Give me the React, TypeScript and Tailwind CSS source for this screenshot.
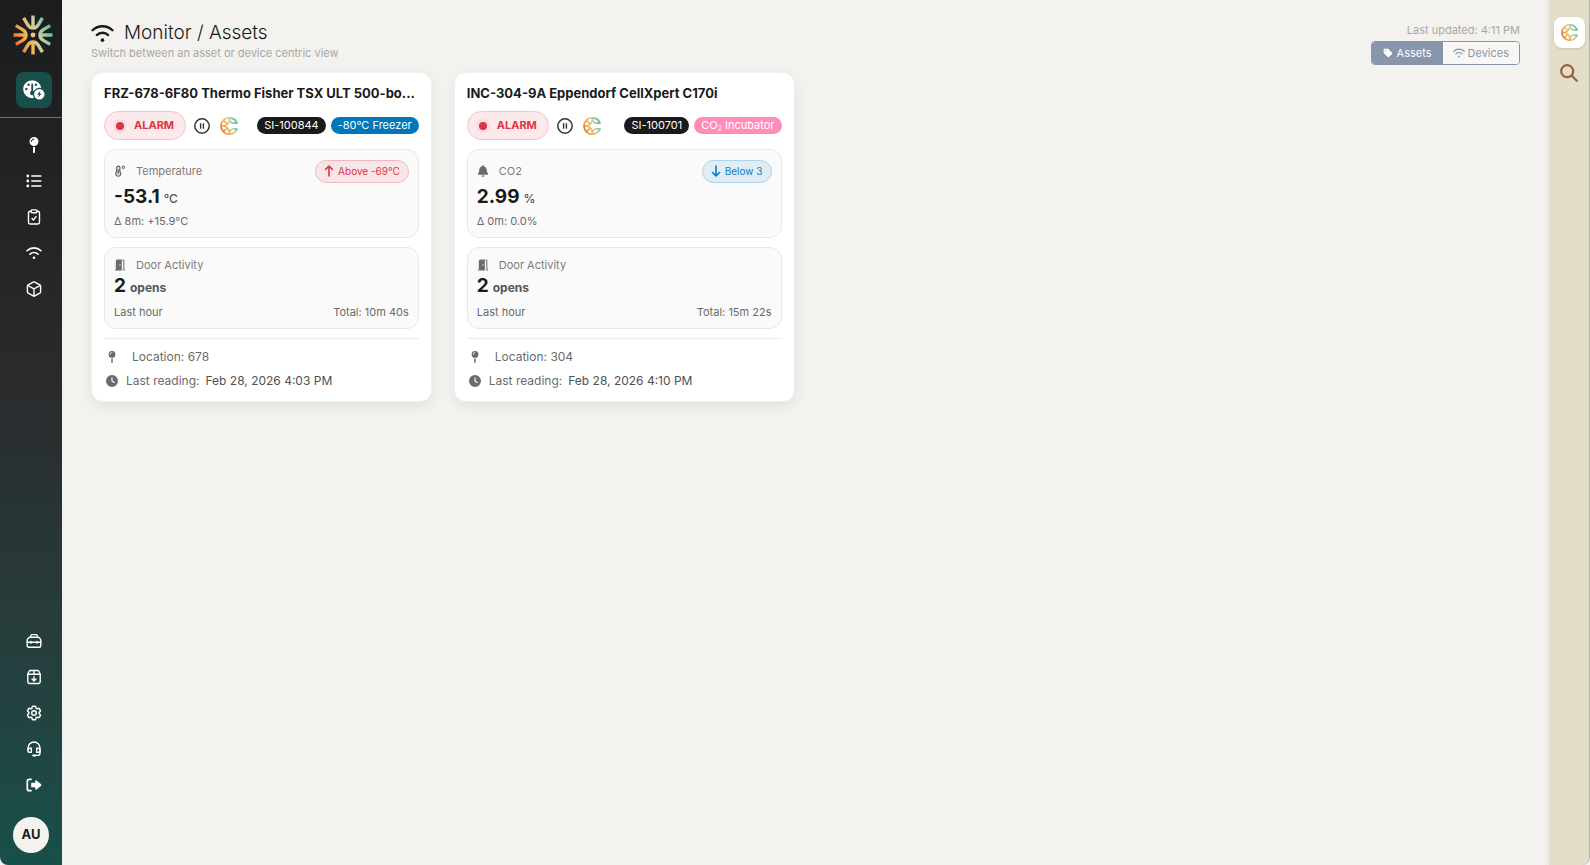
import { useId } from "react";
import type { ReactNode } from "react";
import { FaBell, FaClock, FaMapPin, FaTag } from "react-icons/fa6";
import { HiOutlineCog6Tooth } from "react-icons/hi2";

type IconProps = { className?: string };

const WifiIcon = ({ className }: IconProps) => (
  <svg viewBox="0 0 24 20" fill="none" stroke="currentColor" strokeWidth="2.5" strokeLinecap="round" className={className} aria-hidden="true">
    <path d="M1.500 6.600C7.400.9 16.600.9 22.500 6.600" />
    <path d="M6 11.600c3.300-3.100 8.700-3.100 12 0" />
    <circle cx="12" cy="17" r="1.900" fill="currentColor" stroke="none" />
  </svg>
);

const ListIcon = ({ className }: IconProps) => (
  <svg viewBox="0 0 16 16" fill="none" stroke="currentColor" strokeWidth="1.6" strokeLinecap="round" className={className} aria-hidden="true">
    <path d="M5.8 3h9M5.8 8h9M5.8 13h9" />
    <g fill="currentColor" stroke="none">
      <circle cx="1.8" cy="3" r="1.4" />
      <circle cx="1.8" cy="8" r="1.4" />
      <circle cx="1.8" cy="13" r="1.4" />
    </g>
  </svg>
);

const ClipboardIcon = ({ className }: IconProps) => (
  <svg viewBox="0 0 16 16" fill="none" stroke="currentColor" strokeWidth="1.4" strokeLinecap="round" strokeLinejoin="round" className={className} aria-hidden="true">
    <path d="M5 2.2H4.2c-1 0-1.7.7-1.7 1.7v9.4c0 1 .7 1.7 1.7 1.7h7.6c1 0 1.7-.7 1.7-1.7V3.9c0-1-.7-1.7-1.7-1.7H11" />
    <rect x="5" y=".9" width="6" height="2.8" rx="1.2" />
    <path d="m6 9.6 1.4 1.4L10 7.6" />
  </svg>
);

const CubeIcon = ({ className }: IconProps) => (
  <svg viewBox="0 0 16 16" fill="none" stroke="currentColor" strokeWidth="1.4" strokeLinecap="round" strokeLinejoin="round" className={className} aria-hidden="true">
    <path d="M7.2 1.1a1.7 1.7 0 0 1 1.6 0l5 2.7c.5.3.8.8.8 1.4v5.6c0 .6-.3 1.1-.8 1.4l-5 2.7a1.7 1.7 0 0 1-1.6 0l-5-2.7c-.5-.3-.8-.8-.8-1.4V5.2c0-.6.3-1.1.8-1.4z" />
    <path d="M1.8 4.5 8 7.9l6.2-3.4M8 7.9V15" />
  </svg>
);

const ToolboxIcon = ({ className }: IconProps) => (
  <svg viewBox="0 0 16 16" fill="none" stroke="currentColor" strokeWidth="1.4" strokeLinecap="round" strokeLinejoin="round" className={className} aria-hidden="true">
    <path d="M4.700 4.200V3c0-.8.6-1.400 1.400-1.400h3.800c.8 0 1.400.6 1.400 1.400v1.200" />
    <path d="M4 4.200h8c.5 0 .9.200 1.200.5l1.100 1.200c.4.400.5.900.5 1.400v5.100c0 1.100-.7 1.800-1.700 1.800H2.900c-1 0-1.700-.7-1.700-1.800V7.300c0-.5.200-1 .5-1.400l1.100-1.200c.3-.3.700-.5 1.200-.5z" />
    <path d="M1.200 9.300h13.600M5 8.500v1.800M11 8.500v1.800" />
  </svg>
);

const ArchiveIcon = ({ className }: IconProps) => (
  <svg viewBox="0 0 16 16" fill="none" stroke="currentColor" strokeWidth="1.4" strokeLinecap="round" strokeLinejoin="round" className={className} aria-hidden="true">
    <path d="M1.8 5.2 3 2.5c.3-.6.8-1 1.5-1h7c.7 0 1.2.4 1.5 1l1.2 2.7v7.6c0 1-.8 1.7-1.7 1.7h-9c-1 0-1.7-.7-1.7-1.700z" />
    <path d="M1.8 5.2h12.4M8 1.5v3.700M8 7.600v4M6 9.900l2 2 2-2" />
  </svg>
);

const HeadsetIcon = ({ className }: IconProps) => (
  <svg viewBox="0 0 16 16" fill="none" stroke="currentColor" strokeWidth="1.4" strokeLinecap="round" strokeLinejoin="round" className={className} aria-hidden="true">
    <path d="M2 8.500V7a6 6 0 0 1 12 0v5c0 1.400-1 2.400-2.400 2.400H8.500" />
    <path d="M5.300 7.200v4.200H4A2.100 2.100 0 0 1 4 7.200zM10.700 7.200v4.200H12a2.100 2.100 0 0 0 0-4.200z" />
    <path d="M7.200 14.500h2" strokeWidth="2" />
  </svg>
);

const SignOutIcon = ({ className }: IconProps) => (
  <svg viewBox="0 0 16 16" fill="none" stroke="currentColor" strokeWidth="1.7" strokeLinecap="round" strokeLinejoin="round" className={className} aria-hidden="true">
    <path d="M5 2.300H3.300C2.200 2.300 1.300 3.200 1.300 4.300v7.400c0 1.100.9 2 2 2H5" />
    <path d="M6 6.600h4V4.200L14.600 8 10 11.800V9.400H6z" fill="currentColor" />
  </svg>
);

const DashboardIcon = ({ className }: IconProps) => (
  <svg viewBox="0 0 22 20" className={className} aria-hidden="true">
    <circle cx="9.2" cy="9.2" r="9" fill="#fff" />
    <path d="M9.200 4.500v7" stroke="#184f4a" strokeWidth="1.8" strokeLinecap="round" />
    <g fill="#184f4a">
      <circle cx="9.2" cy="13" r="2.2" />
      <circle cx="5.6" cy="4.8" r="1.2" />
      <circle cx="3.4" cy="9" r="1.2" />
      <circle cx="12.9" cy="4.8" r="1.2" />
      <circle cx="16.3" cy="14.2" r="6.4" />
    </g>
    <circle cx="16.3" cy="14.2" r="5.2" fill="#fff" />
    <path d="m17.300 10.900-3.400 3.700h2l-.7 3 3.400-3.900h-2z" fill="#184f4a" />
  </svg>
);

const ThermometerIcon = ({ className }: IconProps) => (
  <svg viewBox="0 0 12 13" fill="none" stroke="currentColor" strokeWidth="1.5" className={className} aria-hidden="true">
    <path d="M2.400 3a1.700 1.700 0 0 1 3.400 0v4.300a2.700 2.700 0 1 1-3.400 0z" />
    <path d="M4.100 5v4.500" strokeLinecap="round" />
    <circle cx="9.6" cy="2.4" r="1.3" strokeWidth="1.1" />
  </svg>
);

const DoorIcon = ({ className }: IconProps) => (
  <svg viewBox="0 0 12 13" fill="currentColor" className={className} aria-hidden="true">
    <path fillRule="evenodd" d="M1.500 1.500 2.500.5H8V12.500H.5v-1.200h1zM5.500 5.800v1.400h1V5.800z" />
    <path d="M8.800.5h1c.5 0 .9.400.9.900v9.900h.8v1.200H9.600V1.800h-.8z" />
  </svg>
);

const PauseIcon = ({ className }: IconProps) => (
  <svg viewBox="0 0 16 16" fill="none" stroke="currentColor" className={className} aria-hidden="true">
    <circle cx="8" cy="8" r="7.2" strokeWidth="1.5" />
    <path d="M6.600 5.300v5.400M9.400 5.300v5.400" strokeWidth="1.4" />
  </svg>
);

const ArrowIcon = ({ down = false }: { down?: boolean }) => (
  <svg viewBox="0 0 10 12" fill="none" stroke="currentColor" strokeWidth="1.6" strokeLinecap="round" strokeLinejoin="round" className="h-3 w-2.5" aria-hidden="true">
    <path d={down ? "M5 1v10M1.500 7.500 5 11l3.500-3.500" : "M5 11V1M1.500 4.500 5 1l3.500 3.500"} />
  </svg>
);

const SearchIcon = ({ className }: IconProps) => (
  <svg viewBox="0 0 18 18" fill="none" stroke="currentColor" strokeWidth="2.2" strokeLinecap="round" className={className} aria-hidden="true">
    <circle cx="7.2" cy="7.2" r="6" />
    <path d="m11.800 11.800 5 5" />
  </svg>
);

const BrandGradient = ({ id, size }: { id: string; size: number }) => (
  <linearGradient id={id} x1="0" y1={size * 0.7} x2={size} y2={size * 0.3} gradientUnits="userSpaceOnUse">
    <stop offset="0" stopColor="#e2662f" />
    <stop offset="0.3" stopColor="#f3b04c" />
    <stop offset="0.6" stopColor="#d3cf9f" />
    <stop offset="1" stopColor="#45c0ab" />
  </linearGradient>
);

const Logo = () => {
  const id = useId();
  return (
    <svg viewBox="0 0 40 40" fill="none" stroke={`url(#${id})`} strokeWidth="3.4" className="size-10" aria-label="Home">
      <defs>
        <BrandGradient id={id} size={40} />
      </defs>
      <path d="M20 .5 20.010 13M20 39.500 20.010 27M.5 20 13 20.010M39.500 20 27 20.010" />
      <path d="M10.600 2.800 14.600 9.600Q16.600 13 20 13T25.400 9.600L29.400 2.800" />
      <path d="M10.600 37.200 14.600 30.400Q16.600 27 20 27T25.400 30.400L29.400 37.200" />
      <path d="M2.800 10.600 9.600 14.600Q13 16.600 13 20T9.600 25.400L2.800 29.400" />
      <path d="M37.200 10.600 30.400 14.600Q27 16.600 27 20T30.400 25.400L37.200 29.400" />
      <circle cx="20" cy="20" r="2.4" fill="#eec28a" stroke="none" />
    </svg>
  );
};

const BrandMark = ({ className }: IconProps) => {
  const id = useId();
  return (
    <svg viewBox="0 0 18 18" fill="none" stroke={`url(#${id})`} strokeWidth="1.7" className={className} aria-hidden="true">
      <defs>
        <BrandGradient id={id} size={18} />
      </defs>
      <path d="M17 6.200A8.200 8.200 0 1 0 17 11.800" />
      <path d="M17.600 6.200H13.500C11 6.200 9.500 4.200 9.500 1M17.600 11.800H13.500C11 11.800 9.500 13.800 9.500 17" />
      <path d="M9.500 1C9.500 5 7.500 8 4 9 7.500 10 9.500 13 9.500 17M.8 9H4.500M3.200 3.200 7 6.600M3.200 14.800 7 11.400" />
    </svg>
  );
};

const NAV_TOP = [
  { label: "Locations", icon: <FaMapPin className="size-4" /> },
  { label: "Lists", icon: <ListIcon className="size-4" /> },
  { label: "Tasks", icon: <ClipboardIcon className="size-4" /> },
  { label: "Monitor", icon: <WifiIcon className="size-4" /> },
  { label: "Assets", icon: <CubeIcon className="size-4" /> },
];

const NAV_BOTTOM = [
  { label: "Toolbox", icon: <ToolboxIcon className="size-4" /> },
  { label: "Archive", icon: <ArchiveIcon className="size-4" /> },
  { label: "Settings", icon: <HiOutlineCog6Tooth strokeWidth={2} className="size-[18px]" /> },
  { label: "Support", icon: <HeadsetIcon className="size-4" /> },
  { label: "Sign out", icon: <SignOutIcon className="size-4" /> },
];

type Asset = {
  name: string;
  serial: string;
  kind: ReactNode;
  kindClass: string;
  metricIcon: ReactNode;
  metric: string;
  value: string;
  unit: string;
  delta: string;
  limit: string;
  low: boolean;
  opens: number;
  total: string;
  location: string;
  lastReading: string;
};

const ASSETS: Asset[] = [
  {
    name: "FRZ-678-6F80 Thermo Fisher TSX ULT 500-bo...",
    serial: "SI-100844",
    kind: "-80°C Freezer",
    kindClass: "bg-[#0077b9]",
    metricIcon: <ThermometerIcon className="h-3 w-3" />,
    metric: "Temperature",
    value: "-53.1",
    unit: "°C",
    delta: "Δ 8m: +15.9°C",
    limit: "Above -69°C",
    low: false,
    opens: 2,
    total: "10m 40s",
    location: "678",
    lastReading: "Feb 28, 2026 4:03 PM",
  },
  {
    name: "INC-304-9A Eppendorf CellXpert C170i",
    serial: "SI-100701",
    kind: (
      <>
        CO<sub className="text-[7px]">2</sub> Incubator
      </>
    ),
    kindClass: "bg-[#ff8cb9]",
    metricIcon: <FaBell className="size-3" />,
    metric: "CO2",
    value: "2.99",
    unit: "%",
    delta: "Δ 0m: 0.0%",
    limit: "Below 3",
    low: true,
    opens: 2,
    total: "15m 22s",
    location: "304",
    lastReading: "Feb 28, 2026 4:10 PM",
  },
];

const NavList = ({ items }: { items: typeof NAV_TOP }) => (
  <ul className="flex w-full flex-col">
    {items.map((item) => (
      <li key={item.label}>
        <a href="#" aria-label={item.label} className="flex h-9 items-center justify-center pl-1.5 text-white">
          {item.icon}
        </a>
      </li>
    ))}
  </ul>
);

const Sidebar = () => (
  <nav className="flex w-[62px] shrink-0 flex-col items-center rounded-bl-lg bg-linear-to-b from-[#1b1c1e] via-[#2a2b2d] via-45% to-[#184f4a] pt-[15px] pb-3">
    <a href="#" className="ml-[3px]">
      <Logo />
    </a>
    <a href="#" aria-label="Dashboard" className="mt-[17px] ml-1.5 flex size-9 items-center justify-center rounded-lg bg-[#184f4a]">
      <DashboardIcon className="h-5 w-[22px]" />
    </a>
    <div className="my-[9px] h-px w-full bg-[#6f7071]" />
    <NavList items={NAV_TOP} />
    <div className="grow" />
    <NavList items={NAV_BOTTOM} />
    <button className="mt-[14px] size-9 rounded-full bg-[#f3f2ee] text-[13px] font-bold text-[#1b1c1e]">AU</button>
  </nav>
);

const AssetCard = ({ asset }: { asset: Asset }) => (
  <article className="rounded-xl border border-[#f1f1f1] bg-white p-3 pb-2 text-[#6b6b6b] shadow-[0_4px_14px_rgba(0,0,0,0.07)]">
    <h2 className="truncate text-[13px] leading-4 font-bold text-[#1a1a1a]">{asset.name}</h2>

    <div className="mt-2.5 flex items-center">
      <span className="flex h-[29px] items-center gap-2.5 rounded-full border border-[#f6c3c9] bg-[#fbe9eb] px-[11px] text-[11px] font-bold text-[#dc3545]">
        <span className="size-2 rounded-full bg-[#dc3545] shadow-[0_0_0_3px_rgba(220,53,69,0.07)]" />
        ALARM
      </span>
      <button aria-label="Pause alarm" className="ml-2 text-[#38342a]">
        <PauseIcon className="size-4" />
      </button>
      <BrandMark className="ml-2.5 size-[18px]" />
      <div className="ml-auto flex gap-[5px] text-[11px] leading-[17px] text-white">
        <span className="h-[17px] rounded-full bg-[#1a1a1a] px-[7px]">{asset.serial}</span>
        <span className={`h-[17px] rounded-full px-[7px] ${asset.kindClass}`}>{asset.kind}</span>
      </div>
    </div>

    <section className="mt-[9px] rounded-xl border border-[#e8e8e8] bg-[#fafafa] px-[9px] pt-[9px] pb-2">
      <div className="flex h-6 items-center text-[11px]">
        <span className="flex w-[22px] text-[#6c6c6c]">{asset.metricIcon}</span>
        <span className="text-[#7b7b7b]">{asset.metric}</span>
        <span
          className={`ml-auto flex h-[23px] items-center gap-1 rounded-full border px-2 text-[10px] ${
            asset.low ? "border-[#acd3e9] bg-[#e1edf4] text-[#0b7dbc]" : "border-[#f0b9bf] bg-[#f7e6e8] text-[#dc3545]"
          }`}
        >
          <ArrowIcon down={asset.low} />
          {asset.limit}
        </span>
      </div>
      <p className="mt-0.5 flex items-baseline gap-1 text-[19px] leading-6 font-bold text-[#1a1a1a]">
        {asset.value}
        <span className="text-xs leading-none font-medium text-[#555]">{asset.unit}</span>
      </p>
      <p className="mt-1 text-[11px] leading-4">{asset.delta}</p>
    </section>

    <section className="mt-[9px] rounded-xl border border-[#e8e8e8] bg-[#fafafa] px-[9px] py-2">
      <div className="flex h-[18px] items-center text-[11px]">
        <DoorIcon className="mr-2.5 size-3 text-[#6c6c6c]" />
        <span className="text-[#7b7b7b]">Door Activity</span>
      </div>
      <p className="flex items-baseline gap-1 text-[19px] leading-6 font-bold text-[#1a1a1a]">
        {asset.opens}
        <span className="text-xs leading-none font-bold text-[#555]">opens</span>
      </p>
      <p className="mt-1.5 flex justify-between text-[11px] leading-4">
        <span>Last hour</span>
        <span>Total: {asset.total}</span>
      </p>
    </section>

    <footer className="mt-[9px] border-t border-[#ebebeb] pt-1.5 text-xs">
      <p className="flex h-6 items-center gap-3.5">
        <FaMapPin className="ml-0.5 size-3" />
        Location: {asset.location}
      </p>
      <p className="flex h-6 items-center">
        <FaClock className="mr-2 ml-0.5 size-3" />
        Last reading:
        <time className="ml-1.5 text-[#505050]">{asset.lastReading}</time>
      </p>
    </footer>
  </article>
);

const Header = () => (
  <header className="flex items-start justify-between">
    <div>
      <h1 className="flex items-center gap-2.5 text-[19px] leading-6 font-light text-[#1a1a1a]">
        <WifiIcon className="h-[19px] w-[23px]" />
        Monitor / Assets
      </h1>
      <p className="text-[11px] leading-4 text-[#a8a8a6]">Switch between an asset or device centric view</p>
    </div>
    <div className="flex flex-col items-end text-[11px]">
      <p className="mt-px leading-4 text-[#a8a8a6]">Last updated: 4:11 PM</p>
      <div className="mt-[3px] flex h-6 overflow-hidden rounded border border-[#8796ab]">
        <button aria-pressed="true" className="flex items-center gap-1 bg-[#8796ab] px-[11px] text-white">
          <FaTag className="size-2.5" />
          Assets
        </button>
        <button aria-pressed="false" className="flex items-center gap-[3px] bg-[#f8f7f5] px-2.5 text-[#8796ab]">
          <WifiIcon className="h-2.5 w-3" />
          Devices
        </button>
      </div>
    </div>
  </header>
);

const App = () => {
  return (
    <div className="flex min-h-screen bg-[#f3f2ee] font-['Inter','Liberation_Sans',sans-serif]">
      <Sidebar />
      <main className="grow px-[29px] pt-[21px]">
        <Header />
        <div className="mt-[7px] grid grid-cols-[repeat(auto-fill,minmax(320px,1fr))] gap-[22px]">
          {ASSETS.map((asset) => (
            <AssetCard key={asset.serial} asset={asset} />
          ))}
        </div>
      </main>
      <aside className="flex w-[41px] shrink-0 flex-col items-center rounded-br-lg border-r border-[#b5b2a6] bg-[#e3deca] pt-[17px] shadow-[-2px_0_5px_rgba(0,0,0,0.06)]">
        <button aria-label="Assistant" className="flex size-[31px] items-center justify-center rounded-lg bg-white shadow">
          <BrandMark className="size-[17px]" />
        </button>
        <button aria-label="Search" className="mt-4 text-[#9c5f3b]">
          <SearchIcon className="size-[18px]" />
        </button>
      </aside>
    </div>
  );
};

export default App;
